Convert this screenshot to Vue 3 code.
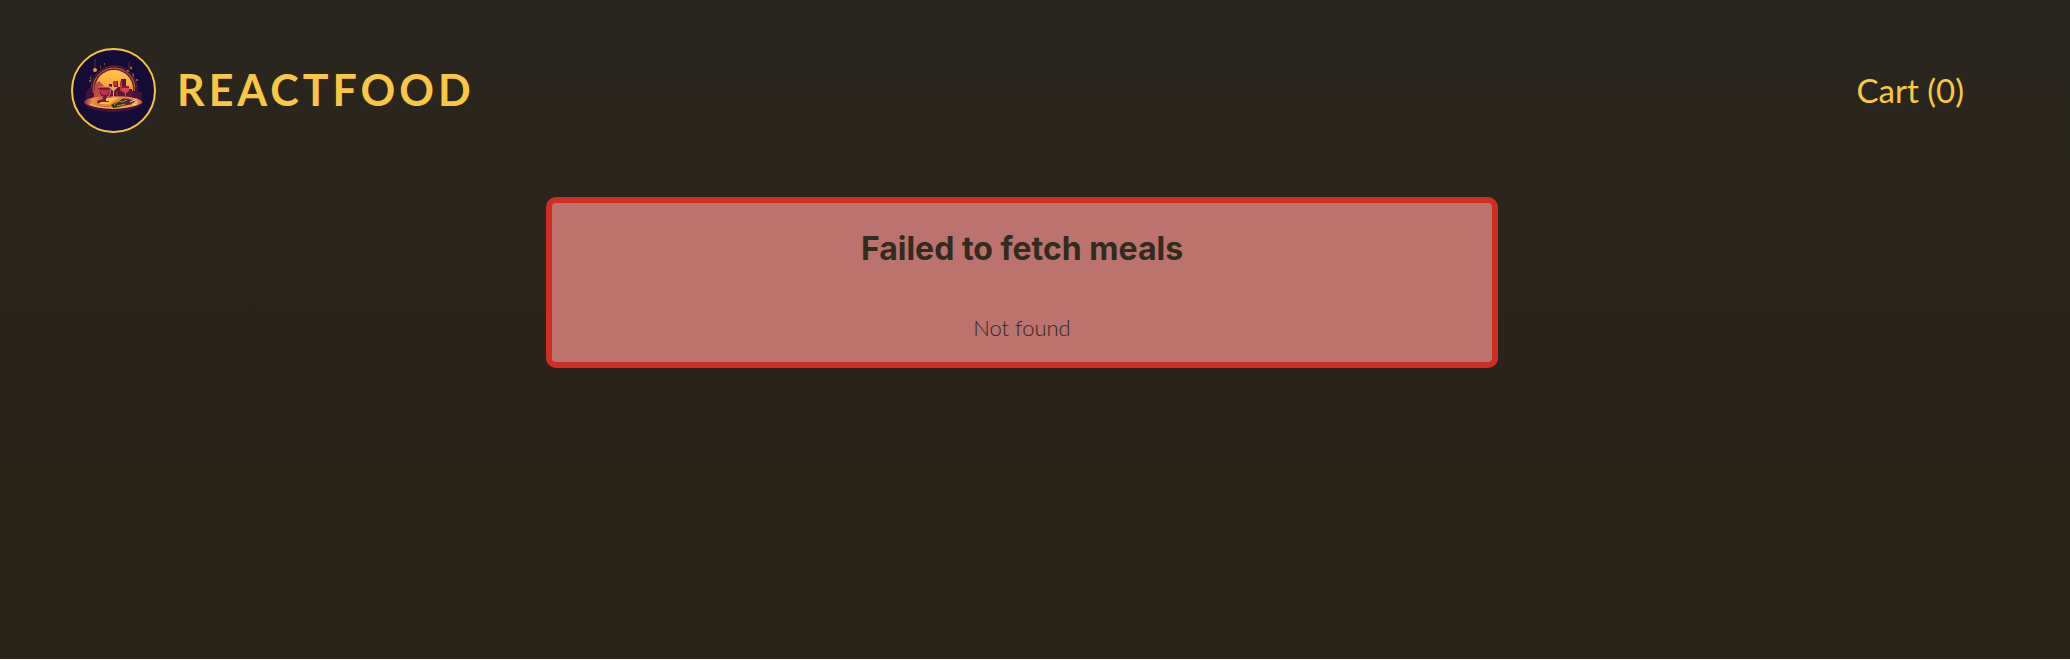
<script setup>
import { ref } from 'vue'

const cartCount = ref(0)
const error = ref({ title: 'Failed to fetch meals', message: 'Not found' })
</script>

<template>
  <div class="page">
    <header class="header">
      <div class="brand">
        <svg class="logo" viewBox="0 0 85 85" role="img" aria-label="Food platter at sunset">
          <defs>
            <linearGradient id="sun" x1="0" y1="0" x2="0" y2="1">
              <stop offset="0" stop-color="#ffc64a" />
              <stop offset="1" stop-color="#f27a28" />
            </linearGradient>
            <linearGradient id="plate" x1="0" y1="0" x2="1" y2="0">
              <stop offset="0" stop-color="#8b2945" />
              <stop offset="0.15" stop-color="#ed9140" />
              <stop offset="0.45" stop-color="#b64735" />
              <stop offset="0.75" stop-color="#f0a13f" />
              <stop offset="1" stop-color="#d46b36" />
            </linearGradient>
            <clipPath id="sky"><path d="M15 55V16h56v39z" /></clipPath>
          </defs>
          <circle cx="42.500" cy="42.500" r="41.500" fill="#140b36" stroke="#f8c442" stroke-width="2" />
          <g clip-path="url(#sky)">
            <circle cx="43" cy="41" r="23" fill="#2f1137" stroke="#6c2838" />
            <circle cx="43" cy="41" r="21" fill="#61213b" stroke="#cf642f" />
            <circle cx="43" cy="41" r="19" fill="url(#sun)" />
            <path d="M14 55V43h3v-3h4v5h3v-7h4v17zM58 55V41h3v2h3v-4h3v5h4v11z" fill="#42113f" />
            <path d="M24 36l4-3 4 4 4 5v13H22z" fill="#c8483e" />
            <path d="M34 53V39h4v-3h3v4h2v-7h4v6h3v-8h5v7h3v5h3v11z" fill="#57183c" />
            <path d="M42 33h4v5h-4zM49 33h2v10h-2zM38 38h2v5h-2z" fill="#bc3435" />
            <path d="M45 43h2v8h-2z" fill="#8d203a" />
          </g>
          <path d="M13 55c2 6 17 9 30 9s28-4 29-10z" fill="#42143d" />
          <ellipse cx="42" cy="54" rx="29" ry="6" fill="url(#plate)" />
          <ellipse cx="45" cy="54" rx="19" ry="4" fill="#642334" />
          <path d="M19 56c9 5 36 6 48-1" fill="none" stroke="#efa744" stroke-width="2" />
          <path d="M27 56l9-6 14-1 6 4-12 6-11-1z" fill="#ed8d32" />
          <path d="M28 56l8-6 12-1-10 7z" fill="#ffba55" />
          <path d="M40 57l13-7 5 3-9 6-7 1z" fill="#3c301b" />
          <path d="M43 57l5-4 3 1 5-2M46 58l8-2" fill="none" stroke="#b59b31" />
          <path d="M59 54l7-3M61 56l6-3M62 57l4-1" stroke="#f5dfad" />
          <path d="M27 39h13c1 7-1 10-5 11v3h3v1h-8v-1h2v-3c-5-2-6-6-5-11z" fill="#761a43" />
          <path d="M27 39h13M28 41c-1 5 1 8 4 8M39 41c1 5-1 8-3 8" fill="none" stroke="#dd877b" />
          <path d="M29 42h9c0 3-1 5-4 5s-5-2-5-5z" fill="#c42d4b" />
          <path d="M38 39h9l-4 4v7h-1v-7z" fill="#e8aa56" />
          <path d="M51 38h7c1 4 0 6-3 7v5h3v1h-6v-1h2v-5c-3-1-4-3-3-7z" fill="#d64a4b" />
          <path d="M51 38h7v2h-7z" fill="#7d2144" />
          <path d="M24 11v11M58 14v7M62 24v7M20 27v6" stroke="#965037" stroke-width="0.500" />
          <circle cx="24" cy="22" r="2" fill="#ed962f" />
          <path d="M60 18l1 2-1 2-1-2z" fill="#d8792d" />
          <path d="M29 19h1M33 16h1M56 23h2M18 33h2M19 30h1M65 32h2M62 27h1" stroke="#eba332" />
        </svg>
        <h1 class="name">REACTFOOD</h1>
      </div>
      <nav><button class="cart" type="button">Cart ({{ cartCount }})</button></nav>
    </header>
    <main class="content">
      <section class="error" role="alert">
        <h2>{{ error.title }}</h2>
        <p>{{ error.message }}</p>
      </section>
    </main>
  </div>
</template>

<style>
html { background: #fff; }
body { margin: 0; }
</style>

<style scoped>
.page {
  box-sizing: border-box;
  min-height: calc(100vh - 1px);
  background: linear-gradient(180deg, #29261f, #2a2416);
  color: #312c1d;
  font-family: Lato, sans-serif;
}
.header {
  display: flex;
  align-items: center;
  justify-content: space-between;
  padding: 48px 106px 48px 71px;
}
.brand { display: flex; align-items: center; gap: 21px; }
.logo { display: block; width: 85px; height: 85px; }
.name {
  margin: 0;
  padding-bottom: 2px;
  color: #f9c744;
  font-size: 43px;
  line-height: 56px;
  font-weight: 700;
  letter-spacing: 4px;
}
.cart {
  display: block;
  padding: 0 0 2px;
  border: 0;
  background: transparent;
  color: #f9c744;
  font: 400 33px/40px Lato, sans-serif;
  cursor: pointer;
}
.content { padding: 16px 50px 48px 24px; }
.error {
  box-sizing: border-box;
  max-width: 952px;
  margin: 0 auto;
  padding: 26px 24px 18px;
  border: 6px solid #d02e25;
  border-radius: 10px;
  background: #bc726d;
  text-align: center;
}
.error h2 { margin: 0 0 43px; font: 700 32px/40px Inter, sans-serif; }
.error p { margin: 0; font-size: 22px; line-height: 32px; font-weight: 300; }
</style>
